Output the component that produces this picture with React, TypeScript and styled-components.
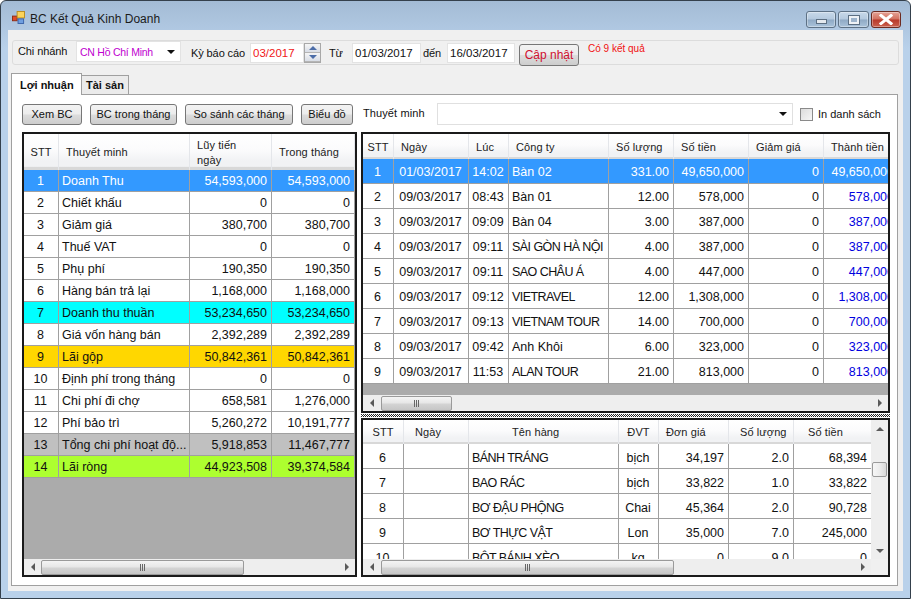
import styled, { createGlobalStyle } from "styled-components";

const GlobalStyle = createGlobalStyle`
  html, body {
    margin: 0;
    padding: 0;
    background: #fff;
  }
  * {
    box-sizing: border-box;
  }
`;

type Align = "left" | "center" | "right";

type Column = {
  width: number;
  label: string;
  align: Align;
  head: Align;
  pad?: number;
};

type RowTone = { bg?: string; color?: string; lastColor?: string };

const profitColumns: Column[] = [
  { width: 35, label: "STT", align: "center", head: "center" },
  { width: 131, label: "Thuyết minh", align: "left", head: "left", pad: 7 },
  { width: 82, label: "Lũy tiến\nngày", align: "right", head: "left", pad: 7 },
  { width: 83, label: "Trong tháng", align: "right", head: "left", pad: 7 },
];

const profitRows = [
  ["1", "Doanh Thu", "54,593,000", "54,593,000"],
  ["2", "Chiết khấu", "0", "0"],
  ["3", "Giảm giá", "380,700", "380,700"],
  ["4", "Thuế VAT", "0", "0"],
  ["5", "Phụ phí", "190,350", "190,350"],
  ["6", "Hàng bán trả lại", "1,168,000", "1,168,000"],
  ["7", "Doanh thu thuần", "53,234,650", "53,234,650"],
  ["8", "Giá vốn hàng bán", "2,392,289", "2,392,289"],
  ["9", "Lãi gộp", "50,842,361", "50,842,361"],
  ["10", "Định phí trong tháng", "0", "0"],
  ["11", "Chi phí đi chợ", "658,581", "1,276,000"],
  ["12", "Phí bảo trì", "5,260,272", "10,191,777"],
  ["13", "Tổng chi phí hoạt độ...", "5,918,853", "11,467,777"],
  ["14", "Lãi ròng", "44,923,508", "39,374,584"],
];

const profitTones: Record<number, RowTone> = {
  0: { bg: "#3399ff", color: "#fff" },
  6: { bg: "#00ffff" },
  8: { bg: "#ffd700" },
  12: { bg: "#c0c0c0" },
  13: { bg: "#adff2f" },
};

const invoiceColumns: Column[] = [
  { width: 31, label: "STT", align: "center", head: "center" },
  { width: 75, label: "Ngày", align: "center", head: "left", pad: 7 },
  { width: 40, label: "Lúc", align: "center", head: "left", pad: 7 },
  { width: 100, label: "Công ty", align: "left", head: "left", pad: 7 },
  { width: 65, label: "Số lượng", align: "right", head: "left", pad: 7 },
  { width: 75, label: "Số tiền", align: "right", head: "left", pad: 7 },
  { width: 75, label: "Giảm giá", align: "right", head: "left", pad: 7 },
  { width: 75, label: "Thành tiền", align: "right", head: "left", pad: 7 },
];

const invoiceRows = [
  ["1", "01/03/2017", "14:02", "Bàn 02", "331.00", "49,650,000", "0", "49,650,000"],
  ["2", "09/03/2017", "08:43", "Bàn 01", "12.00", "578,000", "0", "578,000"],
  ["3", "09/03/2017", "09:09", "Bàn 04", "3.00", "387,000", "0", "387,000"],
  ["4", "09/03/2017", "09:11", "SÀI GÒN HÀ NỘI", "4.00", "387,000", "0", "387,000"],
  ["5", "09/03/2017", "09:11", "SAO CHÂU Á", "4.00", "447,000", "0", "447,000"],
  ["6", "09/03/2017", "09:12", "VIETRAVEL", "12.00", "1,308,000", "0", "1,308,000"],
  ["7", "09/03/2017", "09:13", "VIETNAM TOUR", "14.00", "700,000", "0", "700,000"],
  ["8", "09/03/2017", "09:42", "Anh Khôi", "6.00", "323,000", "0", "323,000"],
  ["9", "09/03/2017", "11:53", "ALAN TOUR", "21.00", "813,000", "0", "813,000"],
];

const invoiceTones: Record<number, RowTone> = {
  0: { bg: "#3399ff", color: "#fff" },
  1: { lastColor: "#0000e0" },
  2: { lastColor: "#0000e0" },
  3: { lastColor: "#0000e0" },
  4: { lastColor: "#0000e0" },
  5: { lastColor: "#0000e0" },
  6: { lastColor: "#0000e0" },
  7: { lastColor: "#0000e0" },
  8: { lastColor: "#0000e0" },
};

const itemColumns: Column[] = [
  { width: 41, label: "STT", align: "center", head: "center" },
  { width: 65, label: "Ngày", align: "left", head: "left", pad: 11 },
  { width: 150, label: "Tên hàng", align: "left", head: "left", pad: 43 },
  { width: 40, label: "ĐVT", align: "center", head: "center" },
  { width: 70, label: "Đơn giá", align: "right", head: "left", pad: 7 },
  { width: 65, label: "Số lượng", align: "right", head: "left", pad: 11 },
  { width: 78, label: "Số tiền", align: "right", head: "left", pad: 14 },
];

const itemRows = [
  ["6", "", "BÁNH TRÁNG", "bịch", "34,197", "2.0", "68,394"],
  ["7", "", "BAO RÁC", "bịch", "33,822", "1.0", "33,822"],
  ["8", "", "BƠ ĐẬU PHỘNG", "Chai", "45,364", "2.0", "90,728"],
  ["9", "", "BƠ THỰC VẬT", "Lon", "35,000", "7.0", "245,000"],
  ["10", "", "BỘT BÁNH XÈO", "kg", "0", "9.0", "0"],
];

// all-caps names sit narrower in the original font
const isCaps = (text: string) => text.length > 6 && text === text.toUpperCase() && !/\d/.test(text);

type GridProps = {
  columns: Column[];
  rows: string[][];
  tones?: Record<number, RowTone>;
  headHeight: number;
  rowHeight: number;
  textLine: number;
};

const GridTable = ({ columns, rows, tones = {}, headHeight, rowHeight, textLine }: GridProps) => {
  const template = columns.map((c) => `${c.width}px`).join(" ");
  return (
    <>
      <HeadRow $cols={template} $h={headHeight}>
        {columns.map((c) => (
          <HeadCell key={c.label} $align={c.head} $pad={c.pad ?? 0}>
            {c.label}
          </HeadCell>
        ))}
      </HeadRow>
      {rows.map((row, i) => (
        <BodyRow key={row[0]} $cols={template} $h={rowHeight} $bg={tones[i]?.bg} $color={tones[i]?.color}>
          {row.map((text, j) => (
            <BodyCell
              key={j}
              $align={columns[j].align}
              $line={textLine}
              $tight={isCaps(text)}
              $color={j === row.length - 1 ? tones[i]?.lastColor : undefined}
            >
              {text}
            </BodyCell>
          ))}
        </BodyRow>
      ))}
    </>
  );
};

const Arrow = ({ dir }: { dir: "left" | "right" | "up" | "down" }) => {
  const points = {
    left: "5,0 5,8 1,4",
    right: "1,0 1,8 5,4",
    up: "0,5 8,5 4,1",
    down: "0,1 8,1 4,5",
  }[dir];
  const wide = dir === "up" || dir === "down";
  return (
    <svg width={wide ? 8 : 6} height={wide ? 6 : 8} viewBox={wide ? "0 0 8 6" : "0 0 6 8"}>
      <polygon points={points} fill="#5a5a5a" />
    </svg>
  );
};

const HScroll = ({ thumb, start }: { thumb: number; start: number }) => (
  <HTrack>
    <ArrowSlot $size={start}>
      <Arrow dir="left" />
    </ArrowSlot>
    <HThumb $width={thumb}>
      <Grip />
      <Grip />
      <Grip />
    </HThumb>
    <HFill />
    <ArrowSlot $size={17}>
      <Arrow dir="right" />
    </ArrowSlot>
  </HTrack>
);

export default function App() {
  return (
    <>
      <GlobalStyle />
      <Win>
        <TitleBar>
          <svg width="13" height="13" viewBox="0 0 14 14">
            <rect x="0.5" y="5.5" width="5" height="5" fill="#e04a2a" stroke="#8c2a14" />
            <rect x="5.5" y="0.5" width="8" height="7" fill="#fbd35a" stroke="#b98a1c" />
            <rect x="6.5" y="8.5" width="6" height="5" fill="#6f9fe0" stroke="#3a62a8" />
          </svg>
          <TitleText>BC Kết Quả Kinh Doanh</TitleText>
          <CaptionGroup>
            <CaptionButton $w={30}>
              <MinGlyph />
            </CaptionButton>
            <CaptionButton $w={31}>
              <MaxGlyph />
            </CaptionButton>
            <CloseButton>
              <svg width="14" height="11" viewBox="0 0 14 11">
                <path d="M2 1.5 L12 9.5 M12 1.5 L2 9.5" stroke="#fff" strokeWidth="3" strokeLinecap="square" />
              </svg>
            </CloseButton>
          </CaptionGroup>
        </TitleBar>

        <Client>
          <FilterBar>
            <FieldLabel $left={5} $w={58} $raise={2}>
              Chi nhánh
            </FieldLabel>
            <Combo $w={105} $color="#c000d0">
              CN Hồ Chí Minh
              <ComboArrow />
            </Combo>
            <FieldLabel $left={10} $w={59}>
              Kỳ báo cáo
            </FieldLabel>
            <TextBox $w={54} $color="#f01818">
              03/2017
            </TextBox>
            <Spinner>
              <SpinPart>
                <Arrow dir="up" />
              </SpinPart>
              <SpinPart>
                <Arrow dir="down" />
              </SpinPart>
            </Spinner>
            <FieldLabel $left={8} $w={23}>
              Từ
            </FieldLabel>
            <TextBox $w={69}>01/03/2017</TextBox>
            <FieldLabel $left={2} $w={24}>
              đến
            </FieldLabel>
            <TextBox $w={68}>16/03/2017</TextBox>
            <UpdateButton>Cập nhật</UpdateButton>
            <ResultNote>Có 9 kết quả</ResultNote>
          </FilterBar>

          <TabStrip>
            <ActiveTab>Lợi nhuận</ActiveTab>
            <IdleTab>Tài sản</IdleTab>
          </TabStrip>

          <TabPanel>
            <Toolbar>
              <ToolButton $w={60}>Xem BC</ToolButton>
              <ToolButton $w={87}>BC trong tháng</ToolButton>
              <ToolButton $w={108}>So sánh các tháng</ToolButton>
              <ToolButton $w={52}>Biểu đồ</ToolButton>
              <ToolLabel>Thuyết minh</ToolLabel>
              <NoteCombo>
                <ComboArrow />
              </NoteCombo>
              <CheckBox />
              <CheckLabel>In danh sách</CheckLabel>
            </Toolbar>

            <GridsArea>
              <GridFrame $h={445}>
                <GridClip>
                  <GridTable
                    columns={profitColumns}
                    rows={profitRows}
                    tones={profitTones}
                    headHeight={36}
                    rowHeight={22}
                    textLine={23}
                  />
                </GridClip>
                <BottomBar>
                  <HScroll thumb={203} start={17} />
                </BottomBar>
              </GridFrame>

              <RightColumn>
                <GridFrame $h={281}>
                  <GridClip>
                    <GridTable
                      columns={invoiceColumns}
                      rows={invoiceRows}
                      tones={invoiceTones}
                      headHeight={25}
                      rowHeight={25}
                      textLine={27}
                    />
                  </GridClip>
                  <BottomBar>
                    <HScroll thumb={71} start={18} />
                  </BottomBar>
                </GridFrame>
                <Splitter />
                <GridFrame $h={159}>
                  <SplitBody>
                    <GridClip>
                      <GridTable columns={itemColumns} rows={itemRows} headHeight={24} rowHeight={25} textLine={28} />
                    </GridClip>
                    <VTrack>
                      <VArrowSlot>
                        <Arrow dir="up" />
                      </VArrowSlot>
                      <VThumb />
                      <VFill />
                      <VArrowSlot>
                        <Arrow dir="down" />
                      </VArrowSlot>
                    </VTrack>
                  </SplitBody>
                  <BottomBar>
                    <HScroll thumb={293} start={18} />
                    <ScrollCorner />
                  </BottomBar>
                </GridFrame>
              </RightColumn>
            </GridsArea>
          </TabPanel>
        </Client>
      </Win>
    </>
  );
}

const Win = styled.div`
  width: 911px;
  height: 599px;
  display: flex;
  flex-direction: column;
  border: 1px solid #34404c;
  border-radius: 6px 6px 0 0;
  background: linear-gradient(180deg, #a3bbd5 0%, #b9d1ea 8%, #b9d1ea 100%);
  font-family: "Liberation Sans", Arial, sans-serif;
  color: #111;
  overflow: hidden;
`;

const TitleBar = styled.div`
  height: 29px;
  flex: none;
  display: flex;
  align-items: center;
  padding: 4px 9px 0 11px;
`;

const TitleText = styled.span`
  margin: 2px 0 0 5px;
  font-size: 12px;
  color: #1b1b1b;
`;

const CaptionGroup = styled.div`
  margin-left: auto;
  display: flex;
  gap: 2px;
  align-self: flex-start;
  margin-top: 6px;
`;

const CaptionButton = styled.div<{ $w: number }>`
  width: ${(p) => p.$w}px;
  height: 17px;
  display: flex;
  align-items: center;
  justify-content: center;
  border: 1px solid #5d7185;
  border-radius: 3px;
  background: linear-gradient(180deg, #c8d9ea 0%, #b4c9de 48%, #8fa9c4 52%, #a9c2da 100%);
  box-shadow: inset 0 0 0 1px rgba(255, 255, 255, 0.35);
`;

const CloseButton = styled(CaptionButton).attrs({ $w: 30 })`
  border-color: #6d2a20;
  background: linear-gradient(180deg, #e5a396 0%, #d2705f 48%, #b8392a 52%, #c9604e 100%);
`;

const MinGlyph = styled.div`
  width: 11px;
  height: 5px;
  margin-top: 4px;
  background: #e4e9ee;
  border: 1px solid #5c6f82;
`;

const MaxGlyph = styled.div`
  width: 10px;
  height: 8px;
  border: 2px solid #eef2f6;
  outline: 1px solid #5c6f82;
  background: #9db4cc;
`;

const Client = styled.div`
  margin: 0 7px 7px 7px;
  flex: 1;
  display: flex;
  flex-direction: column;
  background: #f0f0f0;
  padding: 10px 4px 5px 3px;
  min-height: 0;
`;

const FilterBar = styled.div`
  height: 25px;
  flex: none;
  margin: 0 0 0 1px;
  display: flex;
  align-items: center;
  border: 1px solid #dcdcdc;
  border-radius: 3px;
  font-size: 11px;
`;

const FieldLabel = styled.span<{ $left: number; $w: number; $raise?: number }>`
  width: ${(p) => p.$w}px;
  flex: none;
  margin-left: ${(p) => p.$left}px;
  margin-bottom: ${(p) => (p.$raise ?? 0) * 2}px;
  font-size: 11px;
  letter-spacing: -0.1px;
  white-space: nowrap;
`;

const Combo = styled.div<{ $w: number; $color: string }>`
  position: relative;
  width: ${(p) => p.$w}px;
  height: 21px;
  flex: none;
  margin-top: -2px;
  padding: 0 0 0 3px;
  display: flex;
  align-items: center;
  background: #fff;
  border: 1px solid #e3e3e3;
  color: ${(p) => p.$color};
  font-size: 10.5px;
  letter-spacing: -0.25px;
`;

const ComboArrow = styled.i`
  position: absolute;
  right: 5px;
  top: 8px;
  width: 0;
  height: 0;
  border-left: 4px solid transparent;
  border-right: 4px solid transparent;
  border-top: 4px solid #111;
`;

const TextBox = styled.div<{ $w: number; $color?: string }>`
  width: ${(p) => p.$w}px;
  height: 20px;
  flex: none;
  padding-left: 2px;
  display: flex;
  align-items: center;
  background: #fff;
  border: 1px solid #e3e3e3;
  color: ${(p) => p.$color ?? "#111"};
  font-size: 11.5px;
`;

const Spinner = styled.div`
  width: 17px;
  height: 20px;
  flex: none;
  display: flex;
  flex-direction: column;
  border: 1px solid #a8a8a8;
  background: #f0f0f0;
`;

const SpinPart = styled.div`
  flex: 1;
  display: flex;
  align-items: center;
  justify-content: center;
  background: linear-gradient(180deg, #f6f6f6, #d8dde6);
  border-bottom: 1px solid #b5b5b5;
  svg polygon {
    fill: #4c6da8;
  }
`;

const UpdateButton = styled.div`
  width: 60px;
  height: 22px;
  flex: none;
  margin: 4px 0 0 4px;
  display: flex;
  align-items: center;
  justify-content: center;
  border: 1px solid #777;
  border-radius: 3px;
  background: linear-gradient(180deg, #f3f3f3 0%, #ececec 48%, #dcdcdc 52%, #cdcdcd 100%);
  color: #d01030;
  font-size: 12px;
`;

const ResultNote = styled.span`
  margin: -9px 0 0 9px;
  color: #f01010;
  font-size: 10px;
`;

const TabStrip = styled.div`
  height: 21px;
  flex: none;
  margin-top: 8px;
  display: flex;
  align-items: flex-end;
  position: relative;
  z-index: 1;
`;

const ActiveTab = styled.div`
  width: 71px;
  height: 22px;
  margin-bottom: -1px;
  padding-left: 8px;
  display: flex;
  align-items: center;
  background: #fff;
  border: 1px solid #a0a0a0;
  border-bottom: none;
  font-size: 11px;
  font-weight: bold;
`;

const IdleTab = styled.div`
  width: 47px;
  height: 19px;
  padding-left: 4px;
  display: flex;
  align-items: center;
  background: #ebebeb;
  border: 1px solid #a0a0a0;
  border-left: none;
  border-bottom: none;
  font-size: 11px;
  font-weight: bold;
`;

const TabPanel = styled.div`
  flex: 1;
  width: 887px;
  display: flex;
  flex-direction: column;
  background: #fff;
  border: 1px solid #a0a0a0;
  padding: 8px 0 0 10px;
  min-height: 0;
`;

const Toolbar = styled.div`
  height: 22px;
  flex: none;
  display: flex;
  align-items: center;
  gap: 8px;
`;

const ToolButton = styled.div<{ $w: number }>`
  width: ${(p) => p.$w}px;
  height: 21px;
  flex: none;
  display: flex;
  align-items: center;
  justify-content: center;
  border: 1px solid #777;
  border-radius: 3px;
  background: linear-gradient(180deg, #f3f3f3 0%, #ececec 48%, #dcdcdc 52%, #cdcdcd 100%);
  font-size: 11px;
  white-space: nowrap;
`;

const ToolLabel = styled.span`
  margin: -3px 0 0 2px;
  font-size: 11px;
  letter-spacing: 0.1px;
  width: 66px;
  flex: none;
  white-space: nowrap;
`;

const NoteCombo = styled.div`
  position: relative;
  width: 356px;
  height: 22px;
  flex: none;
  background: #fff;
  border: 1px solid #e0e0e0;
`;

const CheckBox = styled.div`
  width: 13px;
  height: 13px;
  flex: none;
  margin-left: -1px;
  border: 1px solid #8a8a8a;
  background: linear-gradient(135deg, #dcdcdc, #f6f6f6);
`;

const CheckLabel = styled.span`
  margin-left: -3px;
  font-size: 11px;
  white-space: nowrap;
`;

const GridsArea = styled.div`
  flex: none;
  margin-top: 7px;
  display: flex;
  gap: 4px;
`;

const RightColumn = styled.div`
  width: 529px;
  display: flex;
  flex-direction: column;
`;

const GridFrame = styled.div<{ $h: number }>`
  height: ${(p) => p.$h}px;
  flex: none;
  min-width: 335px;
  display: flex;
  flex-direction: column;
  border: 2px solid #1a1a1a;
  overflow: hidden;
`;

const GridClip = styled.div`
  flex: 1;
  min-height: 0;
  min-width: 0;
  overflow: hidden;
  background: #ababab;
`;

const SplitBody = styled.div`
  flex: 1;
  min-height: 0;
  display: flex;
  > div:first-child {
    background: #fff;
  }
`;

const HeadRow = styled.div<{ $cols: string; $h: number }>`
  height: ${(p) => p.$h}px;
  display: grid;
  grid-template-columns: ${(p) => p.$cols};
`;

const HeadCell = styled.div<{ $align: Align; $pad: number }>`
  display: flex;
  align-items: center;
  justify-content: ${(p) => (p.$align === "center" ? "center" : "flex-start")};
  padding: 1px 0 0 ${(p) => p.$pad}px;
  background: linear-gradient(180deg, #ffffff 0%, #fbfbfc 45%, #f1f2f4 75%, #f1f2f4 90%, #d8d8d8 92%);
  border-right: 1px solid #e4e6ea;
  font-size: 11px;
  line-height: 15px;
  letter-spacing: 0.1px;
  white-space: pre-line;
  color: #222;
`;

const BodyRow = styled.div<{ $cols: string; $h: number; $bg?: string; $color?: string }>`
  height: ${(p) => p.$h}px;
  display: grid;
  grid-template-columns: ${(p) => p.$cols};
  background: ${(p) => p.$bg ?? "#fff"};
  color: ${(p) => p.$color ?? "#111"};
`;

const BodyCell = styled.div<{ $align: Align; $line: number; $tight: boolean; $color?: string }>`
  padding: 0 4px 0 3px;
  border-right: 1px solid #a0a0a0;
  border-bottom: 1px solid #a0a0a0;
  text-align: ${(p) => p.$align};
  color: ${(p) => p.$color ?? "inherit"};
  font-size: 12.5px;
  letter-spacing: ${(p) => (p.$tight ? "-0.55px" : "0")};
  line-height: ${(p) => p.$line}px;
  white-space: nowrap;
  overflow: hidden;
`;

const HTrack = styled.div`
  flex: 1;
  min-width: 0;
  display: flex;
  align-items: center;
  background: #eeeeee;
`;

const ArrowSlot = styled.div<{ $size: number }>`
  width: ${(p) => p.$size}px;
  flex: none;
  display: flex;
  justify-content: center;
`;

const HThumb = styled.div<{ $width: number }>`
  width: ${(p) => p.$width}px;
  height: 15px;
  flex: none;
  display: flex;
  align-items: center;
  justify-content: center;
  gap: 1px;
  border: 1px solid #9a9a9a;
  border-radius: 2px;
  background: linear-gradient(180deg, #f4f4f4 0%, #e6e6e6 48%, #d4d4d4 52%, #c6c6c6 100%);
`;

const Grip = styled.i`
  width: 1px;
  height: 7px;
  background: #666;
`;

const HFill = styled.div`
  flex: 1;
`;

const BottomBar = styled.div`
  height: 16px;
  flex: none;
  display: flex;
`;

const ScrollCorner = styled.div`
  width: 17px;
  flex: none;
  background: #f0f0f0;
`;

const VTrack = styled.div`
  width: 17px;
  flex: none;
  display: flex;
  flex-direction: column;
  background: #eeeeee;
`;

const VArrowSlot = styled.div`
  height: 17px;
  flex: none;
  display: flex;
  align-items: center;
  justify-content: center;
`;

const VThumb = styled.div`
  height: 15px;
  flex: none;
  margin: 25px 1px 0;
  border: 1px solid #9a9a9a;
  border-radius: 2px;
  background: linear-gradient(90deg, #f6f6f6 0%, #ececec 50%, #d8d8d8 100%);
`;

const VFill = styled.div`
  flex: 1;
`;

const Splitter = styled.div`
  height: 5px;
  flex: none;
  background-image: conic-gradient(#222 25%, #fff 0 50%, #222 0 75%, #fff 0);
  background-size: 2px 2px;
  background-clip: content-box;
  padding: 1px 0;
`;
